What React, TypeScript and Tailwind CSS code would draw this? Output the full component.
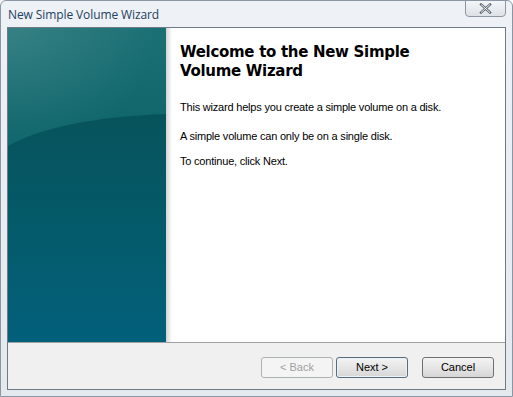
import React from "react";

// --- Wizard side art (teal gradient with a soft curve) ---
const SideArt: React.FC = () => (
    <svg width="158" height="314" viewBox="0 0 158 314" className="block">
        <defs>
            <linearGradient id="base" x1="0" y1="0" x2="0" y2="1">
                <stop offset="0" stopColor="#1b7074" />
                <stop offset="0.3" stopColor="#0f666b" />
                <stop offset="1" stopColor="#03607b" />
            </linearGradient>
            <radialGradient id="glow" cx="0" cy="0" r="1" gradientUnits="userSpaceOnUse" gradientTransform="translate(0 0) scale(150 130)">
                <stop offset="0" stopColor="#ffffff" stopOpacity="0.12" />
                <stop offset="1" stopColor="#ffffff" stopOpacity="0" />
            </radialGradient>
            <linearGradient id="lower" x1="0" y1="0" x2="0" y2="1">
                <stop offset="0" stopColor="#07535c" />
                <stop offset="0.45" stopColor="#045a68" />
                <stop offset="1" stopColor="#03607b" />
            </linearGradient>
        </defs>
        <rect width="158" height="314" fill="url(#base)" />
        <rect width="158" height="314" fill="url(#glow)" />
        <path d="M0 118 Q50 90 158 86 L158 314 L0 314 Z" fill="url(#lower)" />
    </svg>
);

const Button: React.FC<{ label: string; disabled?: boolean; primary?: boolean }> = ({ label, disabled, primary }) => (
    <button
        disabled={disabled}
        className={`w-[72px] h-[21px] rounded-[3px] border text-[11px] leading-none ${
            disabled
                ? "border-[#adb2b5] bg-[#f4f4f4] text-[#a0a0a0]"
                : primary
                ? "border-[#5a6a78] bg-gradient-to-b from-[#f3f3f3] via-[#e6e6e6] to-[#d6d6d6] text-black shadow-[inset_0_0_0_1px_#e8f2fa]"
                : "border-[#707070] bg-gradient-to-b from-[#f3f3f3] via-[#e6e6e6] to-[#d6d6d6] text-black"
        }`}
        style={{ fontFamily: "Tahoma, 'Liberation Sans', sans-serif" }}
    >
        {label}
    </button>
);

export default function App() {
    return (
        <div className="w-[513px] h-[397px] overflow-hidden bg-gradient-to-b from-[#eef2f6] to-[#e4e9ee] rounded-t-[6px] border border-[#8a96a3] flex flex-col relative">
            {/* barra de título */}
            <div className="h-[26px] flex items-start justify-between pl-[7px] pr-[6px]">
                <span className="mt-[5px] text-[12px] tracking-[-0.1px] text-[#1e3f5e]" style={{ fontFamily: "'Open Sans', 'Liberation Sans', sans-serif" }}>
                    New Simple Volume Wizard
                </span>
                <div className="w-[41px] h-[17px] -mt-px rounded-b-[4px] border border-[#8d97a3] bg-gradient-to-b from-[#f4f6f8] to-[#dde2e7] flex items-center justify-center">
                    <svg width="13" height="11" viewBox="0 0 13 11">
                        <path d="M2 1.5 L11 9.5 M11 1.5 L2 9.5" stroke="#5b6570" strokeWidth="2.4" strokeLinecap="square" />
                        <path d="M2 1.5 L11 9.5 M11 1.5 L2 9.5" stroke="#ffffff" strokeWidth="0.9" />
                    </svg>
                </div>
            </div>

            {/* área do cliente */}
            <div className="ml-[6px] w-[499px] h-[363px] border border-[#6f7a86] bg-[#f0f0f0] flex flex-col">
                <div className="h-[314px] flex bg-white">
                    <SideArt />
                    <div className="w-[6px] bg-gradient-to-r from-[#d4d4d4] to-white" />
                    <div className="flex-1 pl-[8px] pt-[15px]" style={{ fontFamily: "Tahoma, 'Liberation Sans', sans-serif" }}>
                        <h1 className="text-[15px] leading-[19px] tracking-[-0.3px] font-bold text-black" style={{ fontFamily: "Verdana, 'DejaVu Sans', sans-serif" }}>
                            Welcome to the New Simple
                            <br />
                            Volume Wizard
                        </h1>
                        <p className="mt-[18px] text-[11px] tracking-[-0.2px] text-black">This wizard helps you create a simple volume on a disk.</p>
                        <p className="mt-[12px] text-[11px] tracking-[-0.2px] text-black">A simple volume can only be on a single disk.</p>
                        <p className="mt-[9px] text-[11px] tracking-[-0.2px] text-black">To continue, click Next.</p>
                    </div>
                </div>
                <div className="border-t border-[#a0a0a0] flex-1 flex items-start justify-end gap-[3px] pt-[14px] pr-[11px]">
                    <Button label="< Back" disabled />
                    <Button label="Next >" primary />
                    <div className="w-[8px]" />
                    <Button label="Cancel" />
                </div>
            </div>
        </div>
    );
}
